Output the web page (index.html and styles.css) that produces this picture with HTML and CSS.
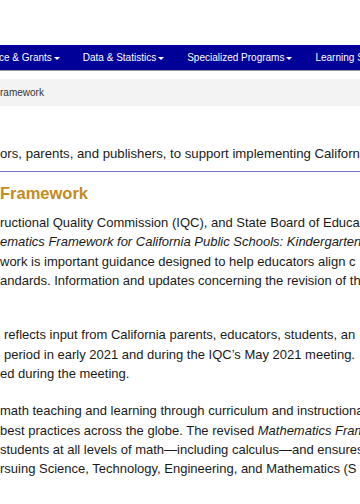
FILE: index.html
```html
<!DOCTYPE html>
<html lang="en">
<head>
    <meta charset="UTF-8">
    <meta name="viewport" content="width=device-width, initial-scale=1.0">
    <title>Mathematics Framework</title>
    <link rel="stylesheet" href="styles.css">
</head>
<body>
    <div class="top"></div>
    <ul class="nav">
        <li>ce &amp; Grants<span class="caret"></span></li>
        <li>Data &amp; Statistics<span class="caret"></span></li>
        <li>Specialized Programs<span class="caret"></span></li>
        <li>Learning S</li>
    </ul>
    <div class="crumbs">ramework</div>

    <div class="main">
        <p class="intro">ors, parents, and publishers, to support implementing Californ</p>
        <hr class="rule">
        <h2 class="title">Framework</h2>

        <div class="para">
            <span class="line">ructional Quality Commission (IQC), and State Board of Educa</span>
            <span class="line"><em>ematics Framework for California Public Schools: Kindergarten</em></span>
            <span class="line">work is important guidance designed to help educators align c</span>
            <span class="line">andards. Information and updates concerning the revision of th</span>
            <span class="line">&nbsp;</span>
        </div>

        <div class="para second">
            <span class="line sp">reflects input from California parents, educators, students, an</span>
            <span class="line sp">period in early 2021 and during the IQC&rsquo;s May 2021 meeting.</span>
            <span class="line">ed during the meeting.</span>
        </div>

        <div class="para third">
            <span class="line">math teaching and learning through curriculum and instructiona</span>
            <span class="line">best practices across the globe. The revised <em>Mathematics Fram</em></span>
            <span class="line">students at all levels of math&mdash;including calculus&mdash;and ensures</span>
            <span class="line">rsuing Science, Technology, Engineering, and Mathematics (S</span>
        </div>
    </div>
</body>
</html>
```

FILE: styles.css
```css
html, body {
    overflow: hidden;
}
body {
    margin: 0;
    font-family: "Liberation Sans", Arial, Helvetica, sans-serif;
    color: #1a1a1a;
    background: #fff;
}
.top {
    height: 45px;
}
.nav {
    display: flex;
    gap: 23px;
    list-style: none;
    margin: 0;
    padding: 0;
    height: 25px;
    background: #000099;
    border-bottom: 1px solid #9a9aa8;
    white-space: nowrap;
}
.nav li {
    color: #fff;
    font-size: 10px;
    line-height: 25px;
}
.nav li:first-child {
    margin-left: -1px;
}
.caret {
    display: inline-block;
    margin-left: 2px;
    vertical-align: middle;
    border-top: 3px solid #fff;
    border-left: 3px solid transparent;
    border-right: 3px solid transparent;
}
.crumbs {
    margin-top: 8px;
    height: 27px;
    line-height: 27px;
    background: #f3f3f3;
    font-size: 10px;
    color: #333;
    white-space: nowrap;
}
.main {
    white-space: nowrap;
}
.intro {
    margin: 38px 0 0;
    font-size: 13.2px;
    line-height: 19px;
}
.rule {
    margin: 8px 0 0;
    border: 0;
    border-top: 1px solid #7474cf;
    height: 0;
}
.title {
    margin: 11px 0 0;
    font-size: 16.5px;
    line-height: 20px;
    font-weight: bold;
    color: #c58b20;
}
.para {
    margin-top: 10px;
    font-size: 13px;
    line-height: 19.3px;
}
.para.second {
    margin-top: 16px;
}
.para.third {
    margin-top: 18px;
}
.line {
    display: block;
}
.line.sp {
    padding-left: 4px;
}
```
